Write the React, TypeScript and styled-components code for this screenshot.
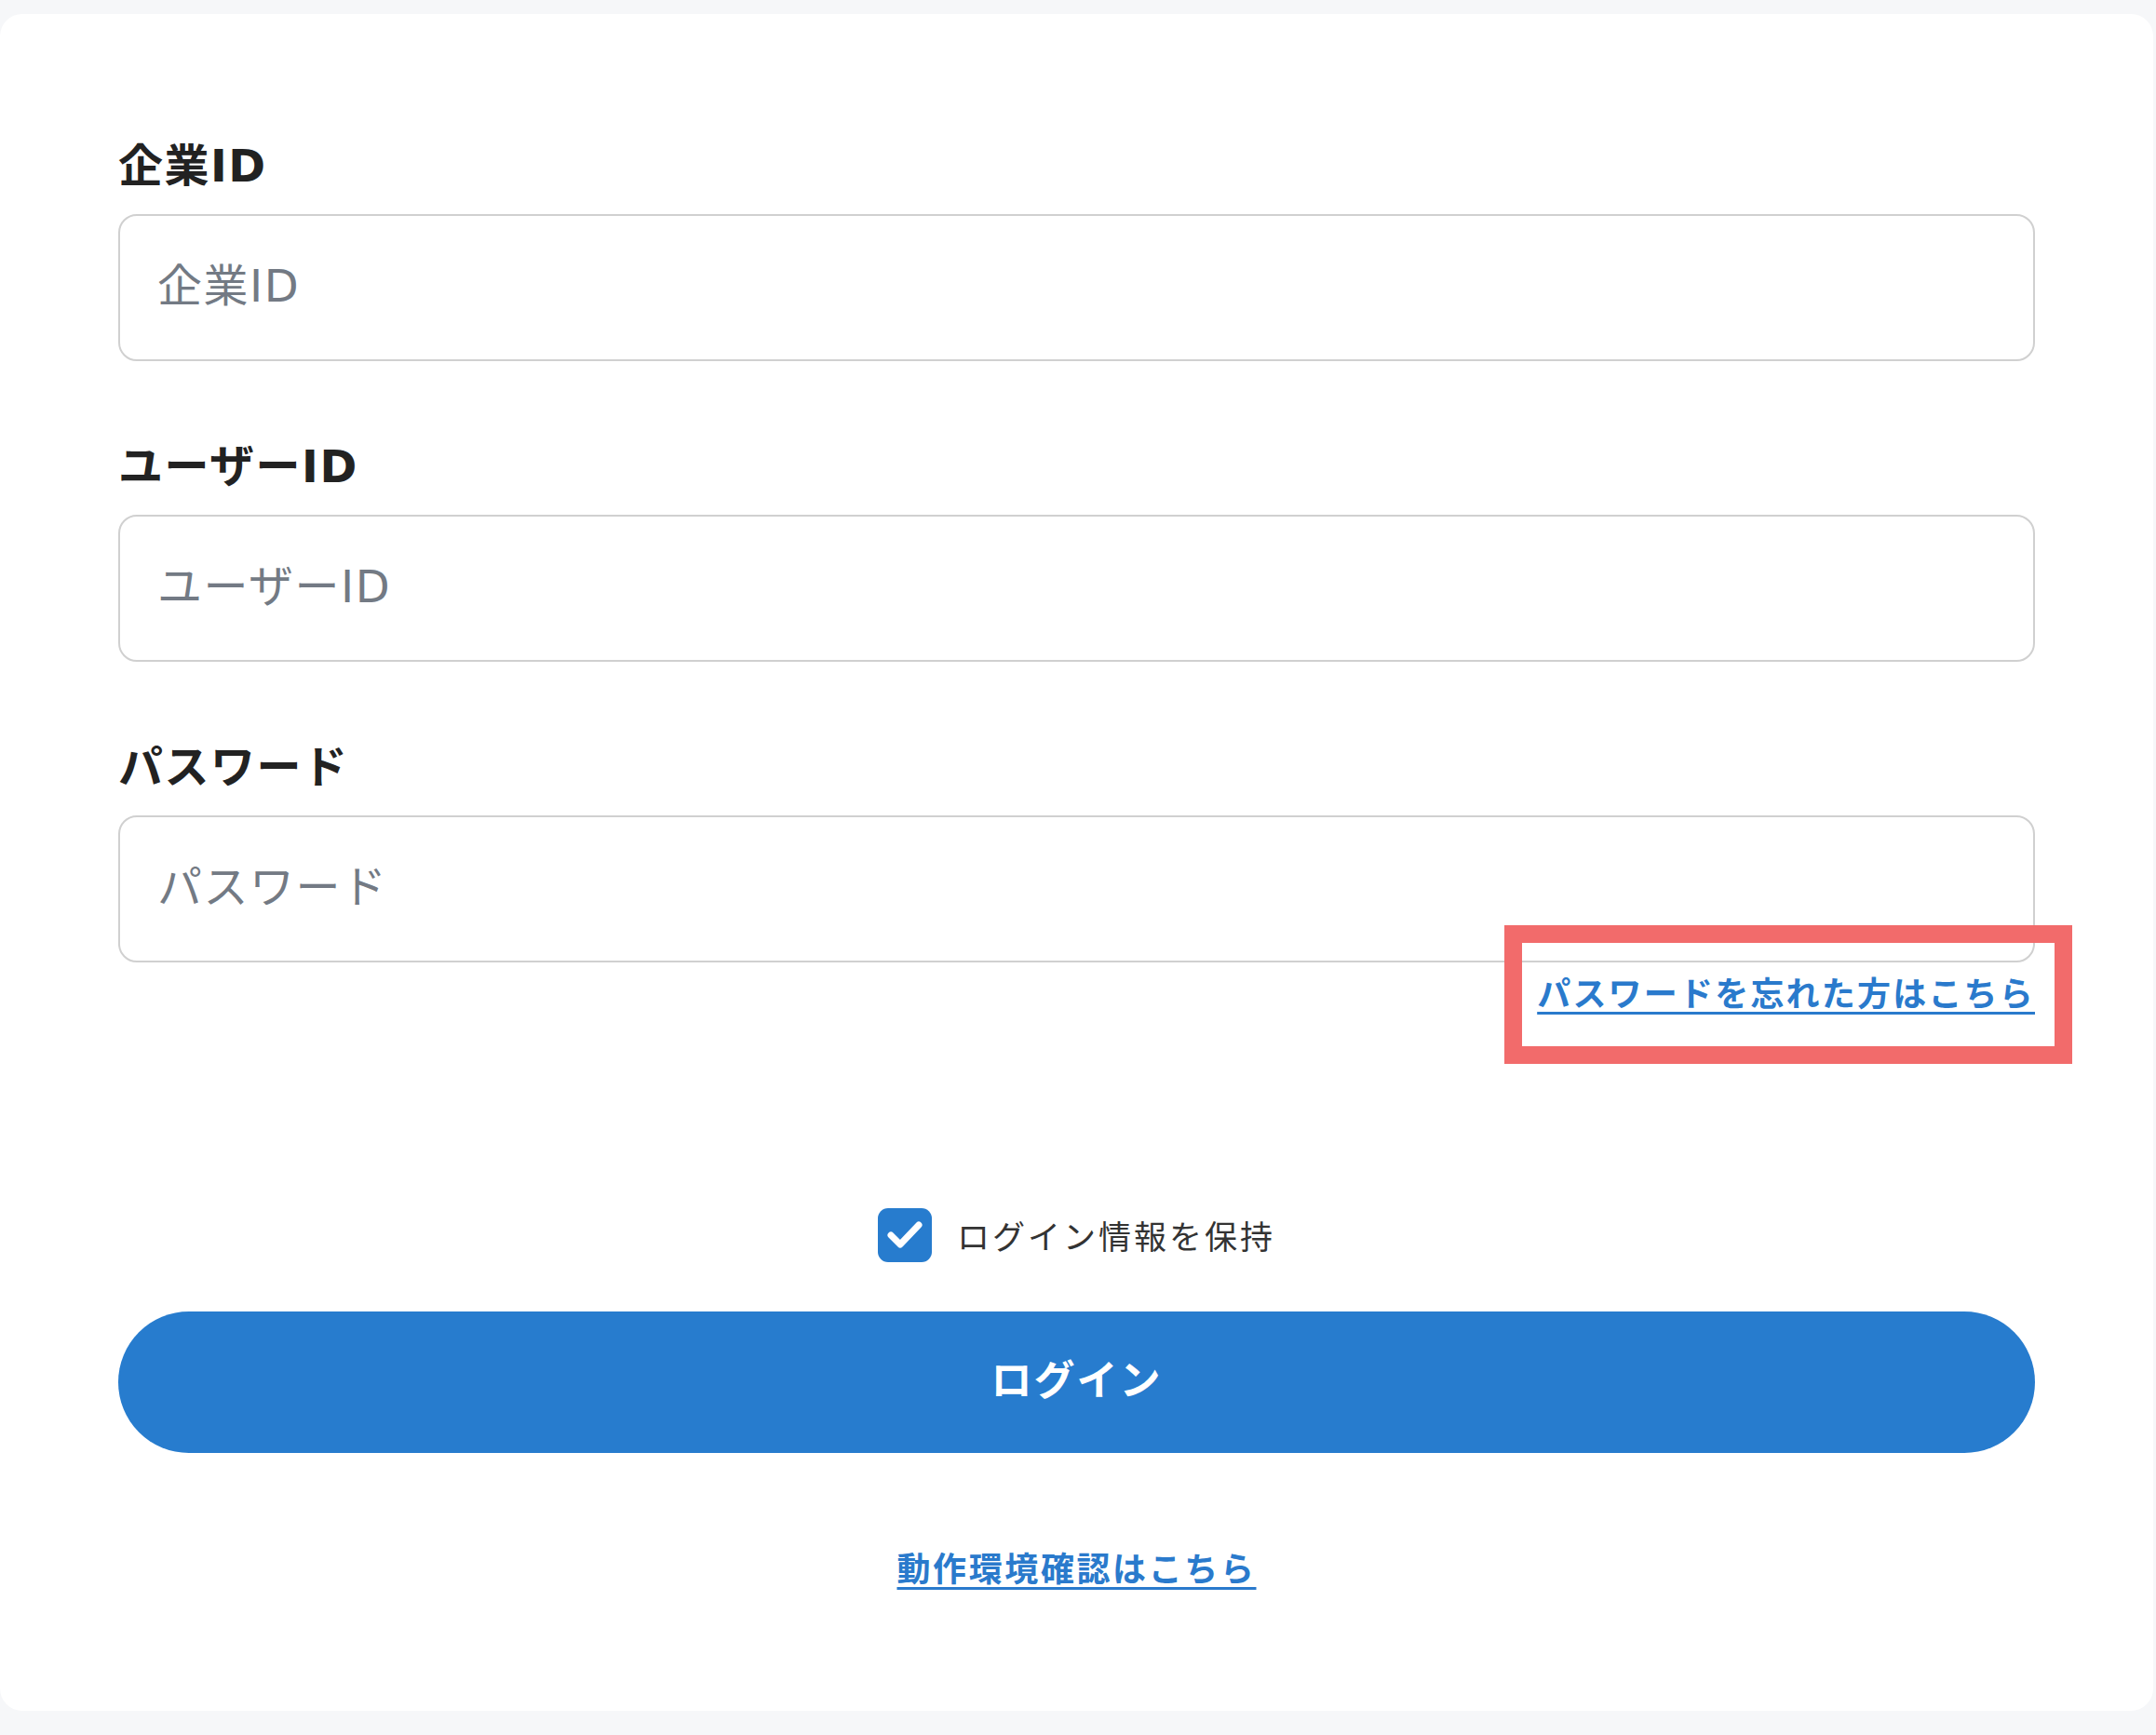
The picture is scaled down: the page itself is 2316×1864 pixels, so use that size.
import React from "react";
import styled, { createGlobalStyle } from "styled-components";

const GlobalStyle = createGlobalStyle`
  html, body {
    margin: 0;
    padding: 0;
    background: #f6f7f9;
  }
  body {
    font-family: "Noto Sans CJK JP", sans-serif;
    color: #222;
  }
  * {
    box-sizing: border-box;
  }
`;

const latinFirst = `"DejaVu Sans", "Noto Sans CJK JP", sans-serif`;

const Page = styled.div`
  padding: 15px 3px 27px 0;
`;

const Card = styled.form`
  display: flex;
  flex-direction: column;
  width: 2313px;
  background: #fff;
  border-radius: 24px;
  padding: 128px 127px 130px;
`;

const Field = styled.div`
  display: flex;
  flex-direction: column;
  gap: 17px;

  & + & {
    margin-top: 78px;
  }
`;

const Label = styled.label`
  font-family: ${latinFirst};
  font-size: 48px;
  font-weight: 700;
  line-height: 70px;
  letter-spacing: 1.5px;
  color: #222;
`;

const Input = styled.input`
  width: 100%;
  height: 158px;
  padding: 0 40px 4px;
  border: 2px solid #d0d0d0;
  border-radius: 20px;
  background: #fff;
  font-family: ${latinFirst};
  font-size: 48px;
  letter-spacing: 1.5px;
  color: #222;
  outline: none;

  &::placeholder {
    color: #737a84;
  }
`;

const LinkRow = styled.div<{ $align: "end" | "center" }>`
  display: flex;
  justify-content: ${(p) => (p.$align === "end" ? "flex-end" : "center")};
`;

const TextLink = styled.a<{ $spacing?: number }>`
  position: relative;
  font-size: 36px;
  font-weight: 700;
  line-height: 50px;
  letter-spacing: ${(p) => p.$spacing ?? 2.2}px;
  color: #2a7acc;
  text-decoration: underline;
  text-decoration-thickness: 3px;
  text-underline-offset: 6px;
  cursor: pointer;
`;

const Highlight = styled.span`
  position: absolute;
  inset: -46px -40px -53px -35px;
  border: 19px solid #f26b6b;
  pointer-events: none;
`;

const RememberRow = styled.label`
  display: flex;
  align-items: center;
  justify-content: center;
  gap: 27px;
  margin-top: 208px;
  cursor: pointer;
`;

const CheckBox = styled.span`
  display: flex;
  align-items: center;
  justify-content: center;
  width: 58px;
  height: 58px;
  border-radius: 11px;
  background: #277cce;
`;

const RememberText = styled.span`
  font-size: 35px;
  line-height: 50px;
  letter-spacing: 3px;
  color: #333;
`;

const LoginButton = styled.button`
  margin-top: 53px;
  height: 152px;
  padding: 0 0 10px;
  border: none;
  border-radius: 76px;
  background: #277cce;
  color: #fff;
  font-family: inherit;
  font-size: 44px;
  font-weight: 700;
  letter-spacing: 2px;
  cursor: pointer;
`;

const BottomLinks = styled(LinkRow)`
  margin-top: 97px;
`;

const ForgotRow = styled(LinkRow)`
  margin-top: 6px;
`;

const CheckIcon = () => (
  <svg width="58" height="58" viewBox="0 0 58 58" fill="none">
    <polyline
      points="14,29 24,39 44,18"
      stroke="#fff"
      strokeWidth="7"
      strokeLinecap="round"
      strokeLinejoin="round"
    />
  </svg>
);

export const LoginPage = () => (
  <Page>
    <Card onSubmit={(e) => e.preventDefault()}>
      <Field>
        <Label htmlFor="company">企業ID</Label>
        <Input id="company" placeholder="企業ID" />
      </Field>
      <Field>
        <Label htmlFor="user">ユーザーID</Label>
        <Input id="user" placeholder="ユーザーID" />
      </Field>
      <Field>
        <Label htmlFor="password">パスワード</Label>
        <Input id="password" type="password" placeholder="パスワード" />
      </Field>

      <ForgotRow $align="end">
        <TextLink>
          パスワードを忘れた方はこちら
          <Highlight />
        </TextLink>
      </ForgotRow>

      <RememberRow>
        <CheckBox>
          <CheckIcon />
        </CheckBox>
        <RememberText>ログイン情報を保持</RememberText>
      </RememberRow>

      <LoginButton type="submit">ログイン</LoginButton>

      <BottomLinks $align="center">
        <TextLink $spacing={2.6}>動作環境確認はこちら</TextLink>
      </BottomLinks>
    </Card>
  </Page>
);

export default function App() {
  return (
    <>
      <GlobalStyle />
      <LoginPage />
    </>
  );
}
